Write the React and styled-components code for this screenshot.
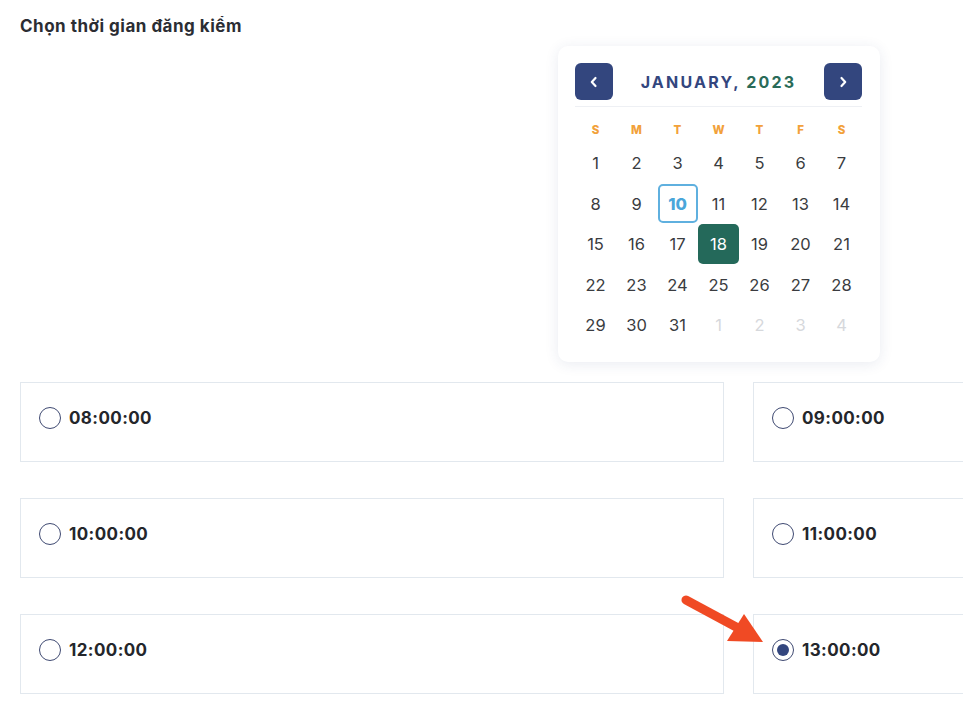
import React, { useState } from 'react';
import styled, { createGlobalStyle } from 'styled-components';

const GlobalStyle = createGlobalStyle`
  html, body {
    margin: 0;
    padding: 0;
    background: #FFFFFF;
    overflow: hidden;
  }
  body {
    font-family: "Inter", "Noto Sans", sans-serif;
    color: #2b2d33;
  }
`;

const Page = styled.div`
  position: relative;
  width: 963px;
  height: 712px;
  padding: 15px 0 0 20px;
  box-sizing: border-box;
  overflow: hidden;
`;

const Title = styled.h2`
  margin: 0;
  font-size: 17px;
  font-weight: 700;
  line-height: 22px;
  letter-spacing: 0.5px;
  color: #2b2d33;
`;

const CalendarRow = styled.div`
  display: flex;
  padding-left: 538px;
  margin-top: 9px;
`;

const Calendar = styled.div`
  width: 322px;
  box-sizing: border-box;
  padding: 17px 18px 16px 17px;
  background: #FFFFFF;
  border-radius: 10px;
  box-shadow: 0 2px 14px rgba(40, 60, 120, 0.10);
`;

const Header = styled.div`
  display: flex;
  align-items: center;
  justify-content: space-between;
  padding-bottom: 6px;
  border-bottom: 1px solid #eef0f4;
`;

const NavButton = styled.button`
  width: 38px;
  height: 37px;
  border: none;
  border-radius: 6px;
  background: #33467e;
  color: #FFFFFF;
  display: flex;
  align-items: center;
  justify-content: center;
  padding: 0;
  cursor: pointer;
`;

const MonthLabel = styled.div`
  font-size: 16px;
  font-weight: 700;
  letter-spacing: 2.2px;
  color: #33467e;
`;

const Year = styled.span`
  color: #2a6b58;
`;

const Grid = styled.div`
  display: grid;
  grid-template-columns: repeat(7, 41px);
  grid-template-rows: 29px;
  grid-auto-rows: 40.5px;
  margin-top: 7px;
`;

const WeekDay = styled.div`
  display: flex;
  align-items: center;
  justify-content: center;
  padding-top: 3px;
  font-size: 11.5px;
  font-weight: 800;
  color: #f2a13a;
`;

const Day = styled.div`
  display: flex;
  align-items: center;
  justify-content: center;
  font-size: 16.5px;
  color: ${p => (p.$muted ? '#d6d8dc' : '#3a3c40')};
`;

const TodayBox = styled.div`
  width: 40px;
  height: 39px;
  box-sizing: border-box;
  border: 2px solid #5fb0df;
  border-radius: 5px;
  display: flex;
  align-items: center;
  justify-content: center;
  color: #4aa6da;
  font-weight: 800;
  font-size: 16.5px;
`;

const SelectedBox = styled.div`
  width: 41px;
  height: 40px;
  border-radius: 5px;
  background: #24695a;
  color: #FFFFFF;
  display: flex;
  align-items: center;
  justify-content: center;
  font-size: 16.5px;
`;

const Slots = styled.div`
  display: grid;
  grid-template-columns: 704px 704px;
  column-gap: 29px;
  row-gap: 36px;
  margin-top: 20px;
`;

const Slot = styled.label`
  height: 80px;
  box-sizing: border-box;
  border: 1px solid #e2e8ee;
  display: flex;
  align-items: center;
  padding: 0 0 7px 18px;
  gap: 8px;
  cursor: pointer;
`;

const Radio = styled.span`
  width: 22px;
  height: 22px;
  box-sizing: border-box;
  border: 1.5px solid #3f4a72;
  border-radius: 50%;
  display: flex;
  align-items: center;
  justify-content: center;

  &::after {
    content: "";
    width: 12px;
    height: 12px;
    border-radius: 50%;
    background: ${p => (p.$checked ? '#33467e' : 'transparent')};
  }
`;

const SlotTime = styled.span`
  font-size: 17px;
  font-weight: 700;
  letter-spacing: 0.4px;
  color: #24262b;
`;

const Pointer = styled.svg`
  position: absolute;
  left: 680px;
  top: 592px;
`;

const weekdays = ['S', 'M', 'T', 'W', 'T', 'F', 'S'];
const days = [
  ...Array.from({ length: 31 }, (_, i) => ({ n: i + 1 })),
  ...[1, 2, 3, 4].map(n => ({ n, muted: true })),
];
const times = ['08:00:00', '09:00:00', '10:00:00', '11:00:00', '12:00:00', '13:00:00'];

const Chevron = ({ dir }) => (
  <svg width="14" height="14" viewBox="0 0 14 14" fill="none">
    <path
      d={dir === 'left' ? 'M8.5 3 L4.8 7 L8.5 11' : 'M5.5 3 L9.2 7 L5.5 11'}
      stroke="#FFFFFF"
      strokeWidth="2.2"
      strokeLinecap="round"
      strokeLinejoin="round"
    />
  </svg>
);

const App = () => {
  const [selected, setSelected] = useState('13:00:00');

  return (
    <Page>
      <GlobalStyle />
      <Title>Chọn thời gian đăng kiểm</Title>

      <CalendarRow>
        <Calendar>
          <Header>
            <NavButton aria-label="Previous month"><Chevron dir="left" /></NavButton>
            <MonthLabel>JANUARY, <Year>2023</Year></MonthLabel>
            <NavButton aria-label="Next month"><Chevron dir="right" /></NavButton>
          </Header>
          <Grid>
            {weekdays.map((d, i) => <WeekDay key={i}>{d}</WeekDay>)}
            {days.map((d, i) => (
              <Day key={i} $muted={d.muted}>
                {!d.muted && d.n === 10 ? <TodayBox>10</TodayBox>
                  : !d.muted && d.n === 18 ? <SelectedBox>18</SelectedBox>
                  : d.n}
              </Day>
            ))}
          </Grid>
        </Calendar>
      </CalendarRow>

      <Slots>
        {times.map(t => (
          <Slot key={t} onClick={() => setSelected(t)}>
            <Radio $checked={selected === t} />
            <SlotTime>{t}</SlotTime>
          </Slot>
        ))}
      </Slots>

      <Pointer width="90" height="60" viewBox="0 0 90 60">
        <path d="M6 8 L58 36" stroke="#f04a24" strokeWidth="9" strokeLinecap="round" />
        <polygon points="83,50 47,49 64,22" fill="#f04a24" />
      </Pointer>
    </Page>
  );
};

export default App;
